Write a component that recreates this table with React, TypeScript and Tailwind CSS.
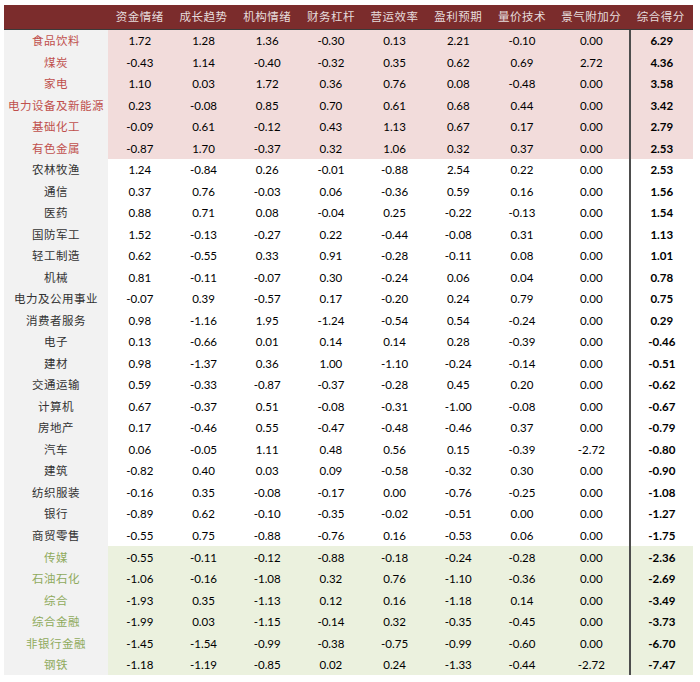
const HEADERS = ["资金情绪", "成长趋势", "机构情绪", "财务杠杆", "营运效率", "盈利预期", "量价技术", "景气附加分", "综合得分"];

type Row = { name: string; tone: "top" | "mid" | "low"; v: string[] };

const ROWS: Row[] = [
  { name: "食品饮料", tone: "top", v: ["1.72", "1.28", "1.36", "-0.30", "0.13", "2.21", "-0.10", "0.00", "6.29"] },
  { name: "煤炭", tone: "top", v: ["-0.43", "1.14", "-0.40", "-0.32", "0.35", "0.62", "0.69", "2.72", "4.36"] },
  { name: "家电", tone: "top", v: ["1.10", "0.03", "1.72", "0.36", "0.76", "0.08", "-0.48", "0.00", "3.58"] },
  { name: "电力设备及新能源", tone: "top", v: ["0.23", "-0.08", "0.85", "0.70", "0.61", "0.68", "0.44", "0.00", "3.42"] },
  { name: "基础化工", tone: "top", v: ["-0.09", "0.61", "-0.12", "0.43", "1.13", "0.67", "0.17", "0.00", "2.79"] },
  { name: "有色金属", tone: "top", v: ["-0.87", "1.70", "-0.37", "0.32", "1.06", "0.32", "0.37", "0.00", "2.53"] },
  { name: "农林牧渔", tone: "mid", v: ["1.24", "-0.84", "0.26", "-0.01", "-0.88", "2.54", "0.22", "0.00", "2.53"] },
  { name: "通信", tone: "mid", v: ["0.37", "0.76", "-0.03", "0.06", "-0.36", "0.59", "0.16", "0.00", "1.56"] },
  { name: "医药", tone: "mid", v: ["0.88", "0.71", "0.08", "-0.04", "0.25", "-0.22", "-0.13", "0.00", "1.54"] },
  { name: "国防军工", tone: "mid", v: ["1.52", "-0.13", "-0.27", "0.22", "-0.44", "-0.08", "0.31", "0.00", "1.13"] },
  { name: "轻工制造", tone: "mid", v: ["0.62", "-0.55", "0.33", "0.91", "-0.28", "-0.11", "0.08", "0.00", "1.01"] },
  { name: "机械", tone: "mid", v: ["0.81", "-0.11", "-0.07", "0.30", "-0.24", "0.06", "0.04", "0.00", "0.78"] },
  { name: "电力及公用事业", tone: "mid", v: ["-0.07", "0.39", "-0.57", "0.17", "-0.20", "0.24", "0.79", "0.00", "0.75"] },
  { name: "消费者服务", tone: "mid", v: ["0.98", "-1.16", "1.95", "-1.24", "-0.54", "0.54", "-0.24", "0.00", "0.29"] },
  { name: "电子", tone: "mid", v: ["0.13", "-0.66", "0.01", "0.14", "0.14", "0.28", "-0.39", "0.00", "-0.46"] },
  { name: "建材", tone: "mid", v: ["0.98", "-1.37", "0.36", "1.00", "-1.10", "-0.24", "-0.14", "0.00", "-0.51"] },
  { name: "交通运输", tone: "mid", v: ["0.59", "-0.33", "-0.87", "-0.37", "-0.28", "0.45", "0.20", "0.00", "-0.62"] },
  { name: "计算机", tone: "mid", v: ["0.67", "-0.37", "0.51", "-0.08", "-0.31", "-1.00", "-0.08", "0.00", "-0.67"] },
  { name: "房地产", tone: "mid", v: ["0.17", "-0.46", "0.55", "-0.47", "-0.48", "-0.46", "0.37", "0.00", "-0.79"] },
  { name: "汽车", tone: "mid", v: ["0.06", "-0.05", "1.11", "0.48", "0.56", "0.15", "-0.39", "-2.72", "-0.80"] },
  { name: "建筑", tone: "mid", v: ["-0.82", "0.40", "0.03", "0.09", "-0.58", "-0.32", "0.30", "0.00", "-0.90"] },
  { name: "纺织服装", tone: "mid", v: ["-0.16", "0.35", "-0.08", "-0.17", "0.00", "-0.76", "-0.25", "0.00", "-1.08"] },
  { name: "银行", tone: "mid", v: ["-0.89", "0.62", "-0.10", "-0.35", "-0.02", "-0.51", "0.00", "0.00", "-1.27"] },
  { name: "商贸零售", tone: "mid", v: ["-0.55", "0.75", "-0.88", "-0.76", "0.16", "-0.53", "0.06", "0.00", "-1.75"] },
  { name: "传媒", tone: "low", v: ["-0.55", "-0.11", "-0.12", "-0.88", "-0.18", "-0.24", "-0.28", "0.00", "-2.36"] },
  { name: "石油石化", tone: "low", v: ["-1.06", "-0.16", "-1.08", "0.32", "0.76", "-1.10", "-0.36", "0.00", "-2.69"] },
  { name: "综合", tone: "low", v: ["-1.93", "0.35", "-1.13", "0.12", "0.16", "-1.18", "0.14", "0.00", "-3.49"] },
  { name: "综合金融", tone: "low", v: ["-1.99", "0.03", "-1.15", "-0.14", "0.32", "-0.35", "-0.45", "0.00", "-3.73"] },
  { name: "非银行金融", tone: "low", v: ["-1.45", "-1.54", "-0.99", "-0.38", "-0.75", "-0.99", "-0.60", "0.00", "-6.70"] },
  { name: "钢铁", tone: "low", v: ["-1.18", "-1.19", "-0.85", "0.02", "0.24", "-1.33", "-0.44", "-2.72", "-7.47"] },
];

const GRID = "grid grid-cols-[104px_repeat(7,63.7px)_75px_64px]";

const rowBg = { top: "bg-[#f2dcdb]", mid: "bg-white", low: "bg-[#ebf1de]" };
const nameColor = { top: "text-[#c0504d]", mid: "text-[#333333]", low: "text-[#8faa5c]" };

export default function App() {
  return (
    <div className="h-[682px] w-[700px] bg-white pl-[4px] pt-[5px] font-['Lato','Noto_Sans_CJK_SC',sans-serif]">
      <div className="w-[689px]">
        <div className={`${GRID} h-[25px] items-center border-b border-[#3a3a3a] bg-[#7b2c2c] text-[11.5px] text-[#e6dcdc]`}>
          <div />
          {HEADERS.map((h) => (
            <div key={h} className="text-center tracking-[0.5px]">
              {h}
            </div>
          ))}
        </div>

        {ROWS.map((r) => (
          <div key={r.name} className={`${GRID} h-[21.53px] items-center ${rowBg[r.tone]} text-[11.5px]`}>
            <div className={`flex h-full items-center justify-center bg-[#f2f2f2] tracking-[0.5px] ${nameColor[r.tone]}`}>
              {r.name}
            </div>
            {r.v.map((n, i) => (
              <div
                key={i}
                className={`flex h-full items-center justify-center text-black ${
                  i === 8 ? "border-l-2 border-[#4d4d4d] font-bold" : ""
                }`}
              >
                {n}
              </div>
            ))}
          </div>
        ))}
      </div>
    </div>
  );
}
